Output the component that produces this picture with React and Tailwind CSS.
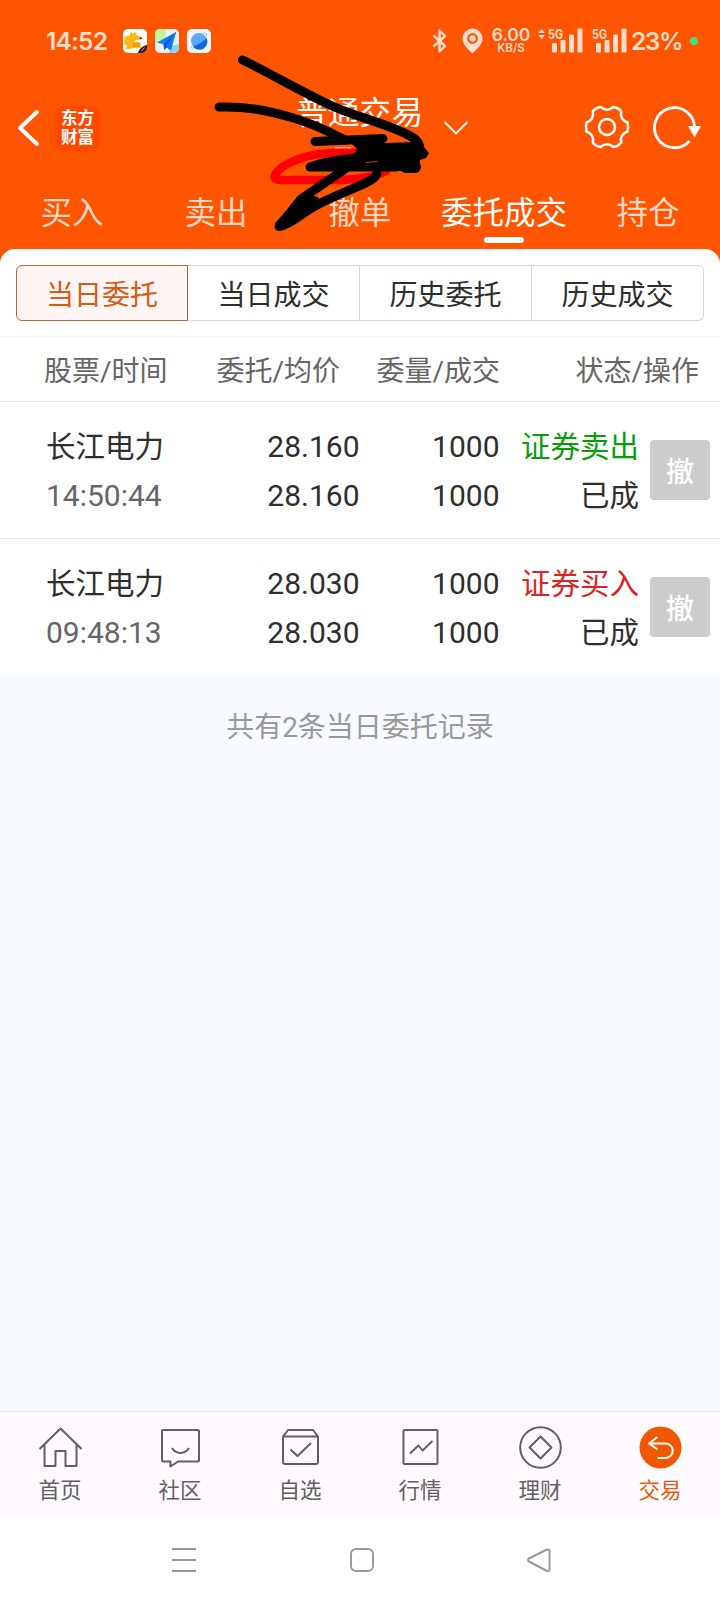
import React, { useState } from "react";

const tabs = ["买入", "卖出", "撤单", "委托成交", "持仓"];
const segments = ["当日委托", "当日成交", "历史委托", "历史成交"];

const orders = [
  { name: "长江电力", time: "14:50:44", price: "28.160", avg: "28.160", amount: "1000", done: "1000", side: "证券卖出", sell: true, status: "已成" },
  { name: "长江电力", time: "09:48:13", price: "28.030", avg: "28.030", amount: "1000", done: "1000", side: "证券买入", sell: false, status: "已成" },
];

function Signal() {
  return (
    <svg className="overflow-visible" width="35" height="26" viewBox="0 0 35 26" fill="#ffdccb">
      <text x="0" y="10.5" fontSize="13.5" fontWeight="700" textLength="15" lengthAdjust="spacingAndGlyphs">5G</text>
      <rect x="4" y="15" width="5" height="9.5" rx="1" />
      <rect x="12.5" y="12" width="5" height="12.5" rx="1" />
      <rect x="21" y="6.5" width="5" height="18" rx="1" />
      <rect x="29.5" y="0.5" width="5" height="24" rx="1" />
    </svg>
  );
}

function StatusBar() {
  return (
    <div className="flex h-[82px] items-center pl-[46px] pr-[22px] font-[Inter,sans-serif] text-[#ffdccb]">
      <span className="w-[77px] text-[24.5px] font-semibold leading-none tracking-[-0.8px]">14:52</span>
      <div className="flex gap-2">
        <svg width="24" height="24" viewBox="0 0 24 24">
          <rect width="24" height="24" rx="5" fill="#fff" />
          <path d="M1.500 8L6 6.500 8.500 3l1.500 2 2-2.500 1.500 3.500 5 2.500-.5 2-5 .5-2 2.500h6v5h-6l-3 1.500H2.500l1.500-3-2.500-2z" fill="#fdb813" />
          <path d="M9 13.500h8.500v5H10z" fill="#f5a000" />
          <path d="M16.500 8.500h2.500v1.500h-2.500z" fill="#4a2c10" />
          <path d="M15 24c1-4 4-7 9-8v3a5 5 0 0 1-5 5z" fill="#3a1a0e" />
          <path d="M18.500 22l3-3.500" stroke="#c9a08a" />
        </svg>
        <svg width="24" height="24" viewBox="0 0 24 24">
          <rect width="24" height="24" rx="5" fill="#eef2f6" />
          <path d="M5 0h6v9L0 14V5a5 5 0 0 1 5-5z" fill="#c4f59c" />
          <path d="M14 24l3-7 7-2v4a5 5 0 0 1-5 5z" fill="#7fd6fb" />
          <path d="M21 3L2 13.500l7 2 6 6z" fill="#0f7df5" />
          <path d="M21 3L8.500 15.500l.5 5.500 3-2.500z" fill="#0657c5" />
          <path d="M21 3L11 17l5 4.500z" fill="#0f7df5" />
        </svg>
        <svg width="24" height="24" viewBox="0 0 24 24">
          <rect width="24" height="24" rx="5" fill="#f4f8fe" />
          <circle cx="12" cy="12" r="8" fill="#5aaaff" />
          <path d="M6 17.500C11 16 17 12 19.500 9A8 8 0 0 1 6 17.500z" fill="#1463e0" />
          <path d="M4.500 16.500c-1 2 .5 3 2.500 2.500M16 4.500c3-1 4.500 0 3.500 2.500" stroke="#9ccfff" strokeWidth="1.200" fill="none" />
        </svg>
      </div>
      <div className="ml-auto flex items-center">
        <svg width="16" height="26" viewBox="0 0 16 26" fill="none" stroke="#ffdccb" strokeWidth="2.400" strokeLinejoin="round">
          <path d="M1.500 7.500L13 18l-5.500 5.500v-21L13 8 1.500 18.500" />
        </svg>
        <svg className="ml-[14px]" width="21" height="26" viewBox="0 0 21 26">
          <path d="M10.500.5a10 10 0 0 1 10 10c0 6-5 10-10 15-5-5-10-9-10-15a10 10 0 0 1 10-10z" fill="#ffdccb" />
          <circle cx="10.500" cy="10.500" r="4.300" fill="none" stroke="#ff5500" strokeWidth="2.200" />
        </svg>
        <div className="ml-[7px] w-[42px] text-center font-semibold">
          <div className="text-[17.500px] leading-[14px] tracking-[-0.1px]">6.00</div>
          <div className="text-[11.500px] leading-[12px]">KB/S</div>
        </div>
        <svg className="mb-[15px] ml-[6px] mr-[3px]" width="7" height="10" viewBox="0 0 7 10" fill="#ffdccb">
          <path d="M0 4l3.500-4L7 4zM0 6h7l-3.500 4z" />
        </svg>
        <Signal />
        <span className="w-[9px]" />
        <Signal />
        <span className="ml-[4px] w-[51px] text-[24.5px] font-semibold leading-none tracking-[-1.4px]">23%</span>
        <span className="ml-[8px] h-2 w-2 rounded-full bg-[#4ade80]" />
      </div>
    </div>
  );
}

function NavBar() {
  return (
    <div className="flex h-[92px] items-center pl-[16px] pr-[19px]">
      <svg width="24" height="40" viewBox="0 0 24 40" fill="none" stroke="#fff" strokeWidth="4" strokeLinecap="round" strokeLinejoin="round">
        <path d="M21 4L4 20l17 16" />
      </svg>
      <div className="ml-[15px] flex h-[45px] w-[45px] flex-col items-center justify-center rounded-[9px] bg-[#ff4800] text-[16.500px] font-bold leading-[19px] text-white">
        <span>东方</span>
        <span>财富</span>
      </div>
      <h1 className="-mt-[31px] ml-[196px] text-[31.800px] leading-10 text-white">普通交易</h1>
      <svg className="ml-[20px]" width="26" height="16" viewBox="0 0 26 16" fill="none" stroke="#fff" strokeWidth="1.800">
        <path d="M1.500 2L13 13.500 24.500 2" />
      </svg>
      <svg className="ml-auto" width="46" height="46" viewBox="-23 -22 46 46" fill="none" stroke="#fff" strokeWidth="2.500" strokeLinejoin="round">
        <path d="M20.500-4.500Q21.500 0 20.500 4.500Q12.500 7.500 14.200 15.700Q11 19.500 6.400 20Q0 14.500-6.400 20Q-11 19.500-14.200 15.700Q-12.500 7.500-20.500 4.500Q-21.500 0-20.500-4.500Q-12.500-7.500-14.200-15.700Q-11-19.500-6.400-20Q0-14.500 6.400-20Q11-19.500 14.200-15.700Q12.500-7.500 20.500-4.500Z" />
        <circle r="8" />
      </svg>
      <svg className="ml-[22px]" width="49" height="46" viewBox="0 0 49 46">
        <path d="M42.500 22A20 20 0 1 0 37.500 36" fill="none" stroke="#fff" strokeWidth="2.800" />
        <path d="M36 21h13L42.500 32.500z" fill="#fff" />
      </svg>
    </div>
  );
}

// Freehand marker strokes drawn over the header
function Scribble() {
  return (
    <svg className="pointer-events-none absolute left-0 top-0" width="720" height="250" viewBox="0 0 720 250" fill="none" strokeLinecap="round" strokeLinejoin="round">
      <path d="M335 148.500h16" stroke="#fff" strokeWidth="2" strokeLinecap="butt" />
      <path d="M358 153C325 151 300 156 284 166C273 174 271 180 281 180H342C360 179 376 176 386 171" stroke="#ff0000" strokeWidth="8.500" />
      <g stroke="#000" strokeWidth="9">
        <path d="M242.500 60C268 72 298 90 328 104C350 115 378 121 402 132C416 138 420 142 420 150" />
        <path d="M219 107C250 106 272 112 290 117C312 123 330 132 345 140" />
        <path d="M315 141.500L383 138.500" />
        <path d="M310 167C325 160 345 160 366 156M310 167H396" />
        <path d="M345 169L301 199L279 226.500C292 224 300 214 317 205C340 192 374 183 377 174" />
        <path d="M406 167H415" strokeWidth="12" />
      </g>
      <path d="M302 194L318 197L322 206L281 230L275 223Z" fill="#000" />
      <path d="M345 137L382 137L384 143L416 142L424 147L429 153L426 158L420 160L420 167L413 172L400 171L395 171H325L316 164L340 156L354 155L357 149Z" fill="#000" />
      <path d="M366 162.500L377 161.500" stroke="#d04000" strokeWidth="1" />
    </svg>
  );
}

const bottomItems = [
  {
    label: "首页",
    icon: <path d="M1.500 24L22.500 3.500 43.500 24M6.500 19.500v21.500h11V26h10v15h11V19.500" />,
  },
  {
    label: "社区",
    icon: <path d="M5 5h35q1 0 1 1v29.500q0 1-1 1H20L12.500 41.500v-5H5q-1 0-1-1V6q0-1 1-1zM14 23c4 6.500 13 6.500 17 0" />,
  },
  {
    label: "自选",
    icon: <path d="M5 11.500V37q0 2 2 2h31q2 0 2-2V11.500zl5-6.500h25l5 6.500M12.500 24.500l7 6.500L33 18" />,
  },
  {
    label: "行情",
    icon: <path d="M6.500 5h32q1 0 1 1v32q0 1-1 1h-32q-1 0-1-1V6q0-1 1-1zM12 28.500l8.500-8 4 5L34.500 16" />,
  },
  {
    label: "理财",
    icon: <path d="M22.500 2.200a20.300 20.300 0 1 1 0 40.600a20.300 20.300 0 1 1 0-40.600zM22.500 11.500l11 11-11 11-11-11z" />,
  },
  {
    label: "交易",
    active: true,
    icon: (
      <>
        <circle cx="22.500" cy="22.500" r="21" fill="#f05800" stroke="none" />
        <path d="M19.500 12l-8.500 6.500 8.500 6M11 18.500h16.500a7 7 0 0 1 0 14.500h-8" stroke="#fff" />
      </>
    ),
  },
];

export default function App() {
  const [tab, setTab] = useState(3);
  const [segment, setSegment] = useState(0);

  return (
    <div className="relative flex h-[1604px] w-[720px] flex-col overflow-hidden bg-[#f7faff] font-[Roboto,'Noto_Sans_CJK_SC',sans-serif] text-[#2e2e2e]">
      <header className="bg-[#ff5500]">
        <StatusBar />
        <NavBar />
        <nav className="grid h-[75px] grid-cols-5">
          {tabs.map((label, i) => (
            <button
              key={label}
              onClick={() => setTab(i)}
              className={`flex flex-col items-center whitespace-nowrap pt-4 text-[31.500px] leading-[47px] ${tab === i ? "text-white" : "text-[#ffd9c6]"}`}
            >
              {label}
              {tab === i && <span className="h-[6px] w-10 rounded-full bg-white" />}
            </button>
          ))}
        </nav>
      </header>

      <div className="bg-[#ff5500]">
        <div className="rounded-t-[15px] bg-white px-4 pb-[15px] pt-4">
          <div className="grid h-14 grid-cols-4">
            {segments.map((label, i) => (
              <button
                key={label}
                onClick={() => setSegment(i)}
                className={`border pt-[5px] text-[28px] leading-none first:rounded-l-md last:rounded-r-md not-first:border-l-0 ${
                  segment === i ? "border-[#b5693a] bg-[#fff5f5] text-[#d95a10]" : "border-[#d4d4d9]"
                }`}
              >
                {label}
              </button>
            ))}
          </div>
        </div>
      </div>

      <div className="flex h-[66px] items-center border-b border-t border-b-[#ebebeb] border-t-[#f8f8f8] bg-white pt-[5px] text-[28px] text-[#666]">
        <span className="w-[200px] pl-[44px]">股票/时间</span>
        <span className="w-[140px] text-right">委托/均价</span>
        <span className="w-[160px] text-right">委量/成交</span>
        <span className="w-[199px] text-right">状态/操作</span>
      </div>

      <div className="divide-y divide-[#ebebeb] bg-white">
        {orders.map((order) => (
          <div key={order.time} className="flex h-[137px] pt-5 text-[30px] leading-[49px]">
            <div className="w-[220px] pl-[46px]">
              <div className="relative top-px text-[29.500px]">{order.name}</div>
              <div className="text-[#666]">{order.time}</div>
            </div>
            <div className="w-[139.5px] text-right">
              <div>{order.price}</div>
              <div>{order.avg}</div>
            </div>
            <div className="w-[140px] text-right">
              <div>{order.amount}</div>
              <div>{order.done}</div>
            </div>
            <div className="w-[139.5px] pt-px text-right text-[29.500px]">
              <div className={order.sell ? "text-[#099c09]" : "text-[#dd2222]"}>{order.side}</div>
              <div>{order.status}</div>
            </div>
            <button className="ml-[11px] mt-[18px] h-[60px] w-[60px] rounded bg-[#ccc] pt-[5px] text-[28px] font-medium leading-none text-white">撤</button>
          </div>
        ))}
      </div>

      <p className="flex-1 pt-8 text-center text-[28px] leading-10 text-[#999]">共有2条当日委托记录</p>

      <nav className="grid h-[105px] grid-cols-6 border-t border-[#e4e4e6] bg-[#fffaff] pt-[13px]">
        {bottomItems.map((item) => (
          <div key={item.label} className={`flex flex-col items-center ${item.active ? "text-[#e85a0c]" : "text-[#606060]"}`}>
            <svg width="45" height="45" viewBox="0 0 45 45" fill="none" stroke="currentColor" strokeWidth="2" strokeLinejoin="round">
              {item.icon}
            </svg>
            <span className="mt-[5px] text-[21.500px] leading-8">{item.label}</span>
          </div>
        ))}
      </nav>

      <div className="flex h-[88px] items-center bg-white text-[#999]">
        <svg className="ml-[172px]" width="24" height="26" fill="none" stroke="currentColor" strokeWidth="2">
          <path d="M0 2h24M0 13h24M0 24h24" />
        </svg>
        <span className="ml-[154px] h-6 w-6 rounded-[6px] border-2 border-current" />
        <svg className="ml-[153px]" width="25" height="26" fill="none" stroke="currentColor" strokeWidth="2" strokeLinejoin="round">
          <path d="M20 2.500L2 11.500q-2 1.500 0 3L20 24q2.500.5 2.500-2V4.500q0-2.500-2.500-2z" />
        </svg>
      </div>

      <Scribble />
    </div>
  );
}
